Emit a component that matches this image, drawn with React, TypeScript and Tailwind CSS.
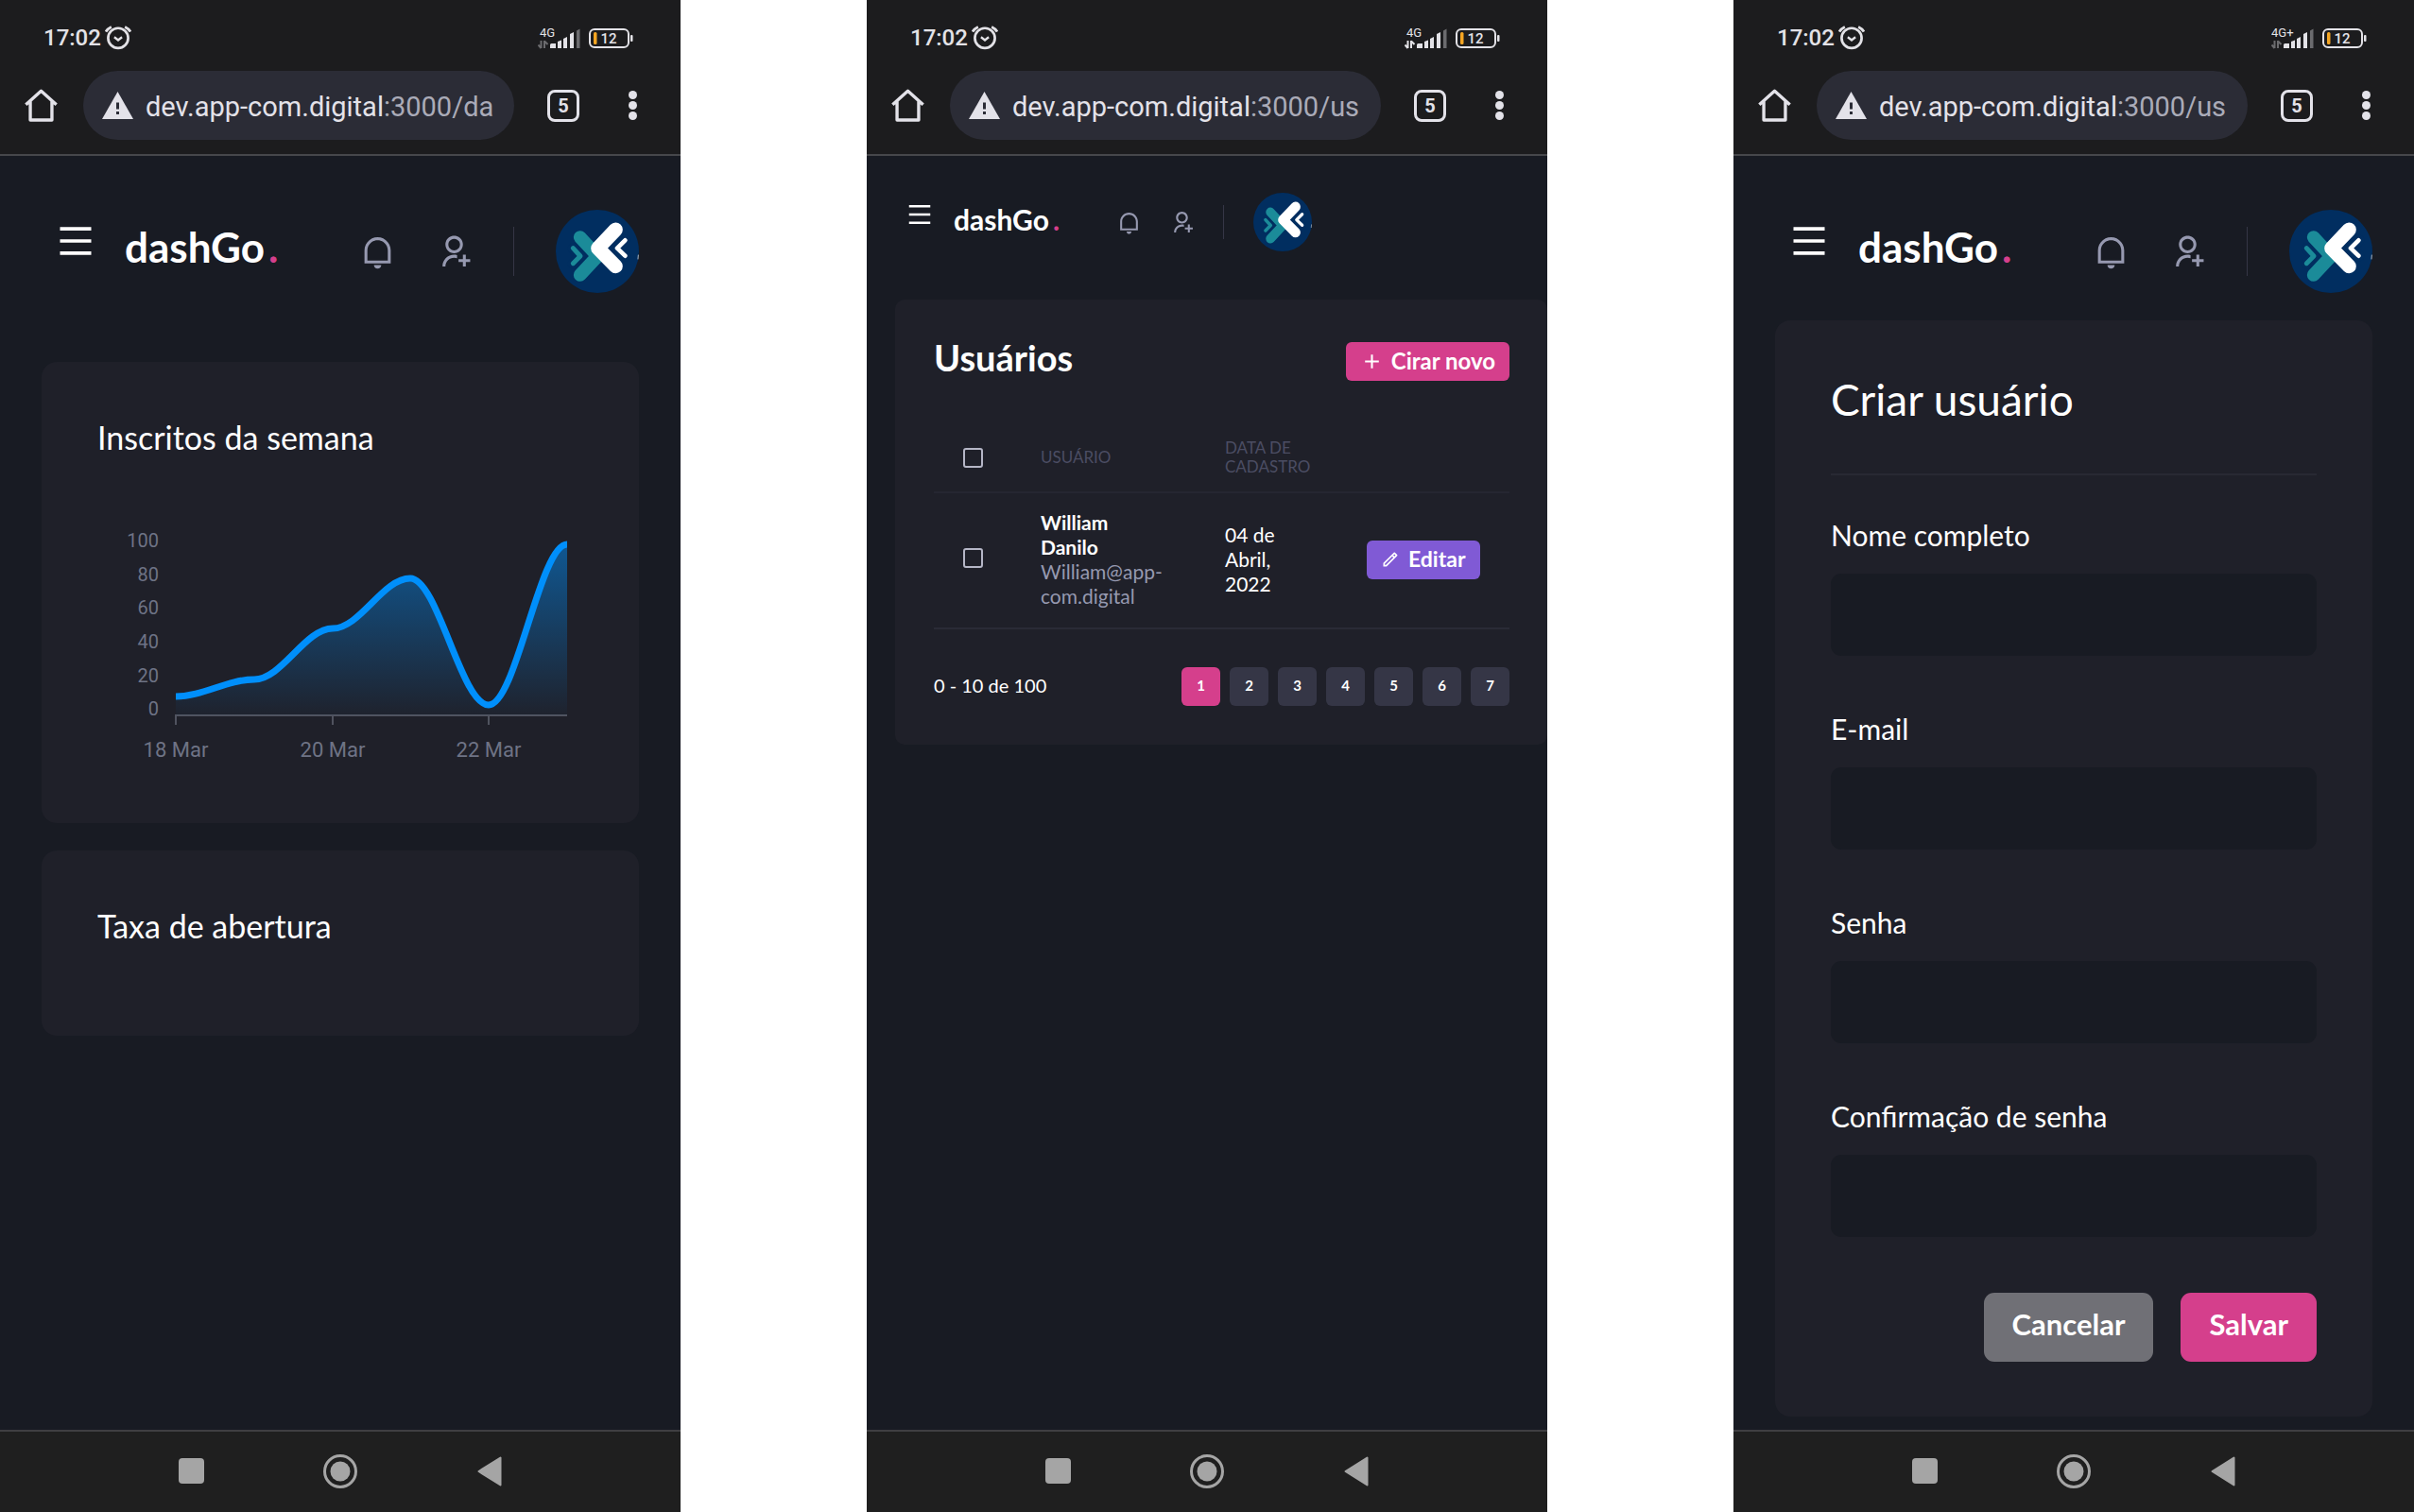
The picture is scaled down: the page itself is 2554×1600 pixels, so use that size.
import { ReactNode, useId } from 'react'
import { RiAddLine, RiMenuLine, RiNotificationLine, RiPencilLine, RiUserAddLine } from 'react-icons/ri'

function AlarmIcon() {
  return (
    <svg className="size-7" viewBox="338 47 82 82" fill="none" stroke="#e3e2e7" strokeWidth="8" aria-hidden="true">
      <circle cx="379" cy="89" r="31" />
      <path d="M367 86l12 9 12-9" strokeWidth="7" />
      <path d="M341 69q6-10 17-15M400 54q11 5 17 15" />
    </svg>
  )
}

function Signal({ network, active }: { network: string; active?: boolean }) {
  return (
    <svg className="h-6 w-[45px]" viewBox="569 27 45 24" aria-hidden="true">
      <text x={network.length > 2 ? 569 : 571} y="38" fontSize="13" fill="#e3e2e7" className="font-[Roboto]">{network}</text>
      <g fill="#e3e2e7">
        <path d="M582 46.500q0-1.500 1.500-1.500h4.500v5h-6zM590 43l4-1.500V50h-4zM596 40l4-2v12h-4zM603 35l4-2v17h-4z" />
      </g>
      <path d="M610 31.500l3.500-2V50H610z" fill="#6b6b6e" />
      <path d="M572.500 42v8M572.500 50l-3-3.500M576 50v-8M576 42.500l3.500 3.500" stroke={active ? '#e3e2e7' : '#6b6b6e'} strokeWidth="2" fill="none" />
    </svg>
  )
}

function Battery() {
  return (
    <svg className="h-6 w-12" viewBox="622 27 48 24" aria-hidden="true">
      <rect x="624" y="30" width="41" height="19" rx="5" fill="none" stroke="#e3e2e7" strokeWidth="2" />
      <rect x="667" y="36" width="2.500" height="7" rx="1" fill="#e3e2e7" />
      <rect x="628" y="33" width="3.500" height="13" rx="1.500" fill="#f5a623" />
      <text x="635.500" y="45" fontSize="15" fontWeight="500" fill="#e3e2e7" className="font-[Roboto]">12</text>
    </svg>
  )
}

function HomeIcon() {
  return (
    <svg className="size-[35px]" viewBox="80 254 104 104" fill="none" stroke="#e3e2e9" strokeWidth="10" strokeLinejoin="round" aria-hidden="true">
      <path d="M84 304l48-43 48 43M98 294v58h68v-58" />
    </svg>
  )
}

function WarningIcon() {
  return (
    <svg className="h-[29px] w-[33px] shrink-0" viewBox="0 0 33 29" aria-hidden="true">
      <path d="M16.500 0L33 29H0z" fill="#e3e2e9" />
      <path d="M15 11.500h3v7h-3zM15 21h3v3h-3z" fill="#2b2c36" />
    </svg>
  )
}

function BrowserBar({ network, active, path }: { network: string; active?: boolean; path: string }) {
  return (
    <header className="border-b-2 border-[#46474b] bg-[#1c1c1e] font-[Roboto]">
      <div className="flex h-[75px] items-center pt-1 pl-[46px] pr-[50px] text-[#e3e2e7]">
        <time className="text-2xl font-medium">17:02</time>
        <span className="ml-1"><AlarmIcon /></span>
        <div className="ml-auto flex items-center gap-2">
          <Signal network={network} active={active} />
          <Battery />
        </div>
      </div>
      <div className="flex items-center pb-[15px] pl-[26px] pr-[46px]">
        <button type="button" aria-label="Página inicial"><HomeIcon /></button>
        <button type="button" aria-label="Endereço do site" className="ml-[27px] flex h-[73px] min-w-0 flex-1 items-center gap-[13px] rounded-full bg-[#2b2c36] pl-5">
          <WarningIcon />
          <span className="pt-0.5 text-[29px] leading-10 whitespace-nowrap text-[#e3e2e9]">
            dev.app-com.digital<span className="text-[#aaabb8]">:3000/{path}</span>
          </span>
        </button>
        <button type="button" aria-label="Abas abertas" className="ml-[35px] flex size-[34px] items-center justify-center rounded-lg border-[3px] border-[#e3e2e9] text-xl leading-none font-bold text-[#e3e2e9]">5</button>
        <button type="button" aria-label="Mais opções" className="ml-[52px] flex flex-col gap-0.5">
          <span className="size-[9px] rounded-full bg-[#e3e2e9]" />
          <span className="size-[9px] rounded-full bg-[#e3e2e9]" />
          <span className="size-[9px] rounded-full bg-[#e3e2e9]" />
        </button>
      </div>
    </header>
  )
}

function SystemNav() {
  return (
    <nav aria-label="Sistema" className="flex h-[87px] items-center justify-center gap-[122px] border-t-2 border-[#3f3f42] bg-[#1f1f1f] pb-0.5">
      <button type="button" aria-label="Recentes" className="flex w-9 justify-center">
        <span className="size-[27px] rounded bg-[#a5a5a5]" />
      </button>
      <button type="button" aria-label="Início">
        <svg className="size-9" viewBox="0 0 36 36" aria-hidden="true">
          <circle cx="18" cy="18" r="16.500" fill="none" stroke="#a5a5a5" strokeWidth="3" />
          <circle cx="18" cy="18" r="10.500" fill="#a5a5a5" />
        </svg>
      </button>
      <button type="button" aria-label="Voltar" className="flex w-9 justify-center">
        <svg className="h-8 w-[26px]" viewBox="0 0 26 32" aria-hidden="true">
          <path d="M24.500 1.500v29L1.500 16z" fill="#a5a5a5" stroke="#a5a5a5" strokeWidth="2" strokeLinejoin="round" />
        </svg>
      </button>
    </nav>
  )
}

function Avatar({ className }: { className: string }) {
  return (
    <svg className={className} viewBox="86 66 264 264" fill="none" strokeLinecap="round" strokeLinejoin="round" role="img" aria-label="Avatar">
      <circle cx="218" cy="198" r="132" fill="#012e60" />
      <path d="M163 153l56 60-56 60" stroke="#1b8b99" strokeWidth="41" />
      <path d="M141 188l23 25-23 23" stroke="#012e60" strokeWidth="34" />
      <path d="M141 188l23 25-23 23" stroke="#1b8b99" strokeWidth="15" />
      <path d="M276 129l-56 59 56 57" stroke="#fff" strokeWidth="45" />
      <path d="M306 163l-25 25 25 24" stroke="#012e60" strokeWidth="36" />
      <path d="M306 163l-25 25 25 24" stroke="#fff" strokeWidth="14" />
      <path d="M348 210l-1 12" stroke="#fff" strokeWidth="2" />
    </svg>
  )
}

function AppHeader({ compact }: { compact?: boolean }) {
  return (
    <div className={compact ? 'flex w-[471px] items-center pt-[39px] pl-[41px]' : 'flex items-center pt-[57px] pl-[58px] pr-11'}>
      <button type="button" aria-label="Abrir menu" className={compact ? 'pb-4 text-3xl text-white' : 'pb-[22px] text-[44px] text-white'}>
        <RiMenuLine />
      </button>
      <a href="#inicio" className={compact ? 'ml-[21px] pb-1.5 text-[30px] leading-9 font-bold text-white' : 'ml-[30px] pb-[10px] text-[44px] leading-[52px] font-bold text-white'}>
        dashGo<span className="ml-1 text-[#d53f8c]">.</span>
      </a>
      <div className={compact ? 'ml-auto flex items-center gap-[31px] text-[25px] text-[#9699b0]' : 'ml-auto flex items-center gap-11 text-[37px] text-[#9699b0]'}>
        <button type="button" aria-label="Notificações"><RiNotificationLine /></button>
        <button type="button" aria-label="Adicionar usuário"><RiUserAddLine /></button>
        <span className={compact ? 'h-9 w-px bg-[#353646]' : 'h-[52px] w-px bg-[#353646]'} />
        <Avatar className={compact ? 'size-[62px]' : 'size-[88px]'} />
      </div>
    </div>
  )
}

function Phone({ children, ...bar }: { children: ReactNode; network: string; active?: boolean; path: string }) {
  return (
    <section className="flex min-h-screen min-w-0 flex-col overflow-hidden bg-[#181b23] font-[Lato,sans-serif] text-white">
      <BrowserBar {...bar} />
      <main className="flex-1">{children}</main>
      <SystemNav />
    </section>
  )
}

const yLabels: [string, number][] = [['100', 91], ['80', 127], ['60', 162], ['40', 198], ['20', 234], ['0', 269]]
const xLabels: [string, number][] = [['18 Mar', 83], ['20 Mar', 249], ['22 Mar', 414]]
const curve = 'M83 256C112 256 137 238 166 238S220 184 249 184S302 131 331 131S385 265 414 265S468 95 497 95'

function SignupsChart() {
  return (
    <svg className="block w-full" viewBox="0 2 514 330" role="img" aria-label="Inscritos por dia">
      <defs>
        <linearGradient id="area" x1="0" y1="95" x2="0" y2="276" gradientUnits="userSpaceOnUse">
          <stop offset="0" stopColor="#008ffb" stopOpacity="0.500" />
          <stop offset="1" stopColor="#008ffb" stopOpacity="0.020" />
        </linearGradient>
        <clipPath id="plot"><rect x="83" y="80" width="414" height="200" /></clipPath>
      </defs>
      <g fill="#6e7385" className="font-[Roboto]">
        {yLabels.map(([t, y]) => <text key={t} x="65" y={y + 7} fontSize="20" textAnchor="end">{t}</text>)}
        {xLabels.map(([t, x]) => <text key={t} x={x} y="320" fontSize="22" textAnchor="middle">{t}</text>)}
      </g>
      <path d="M83 286v-10h414M249 276v10M414 276v10" stroke="#50535f" strokeWidth="2" fill="none" />
      <g clipPath="url(#plot)">
        <path d={`${curve}V276H83Z`} fill="url(#area)" />
        <path d={curve} fill="none" stroke="#008ffb" strokeWidth="7" />
      </g>
    </svg>
  )
}

function Dashboard() {
  return (
    <>
      <AppHeader />
      <div className="mt-[73px] flex flex-col gap-[29px] px-11">
        <article className="rounded-2xl bg-[#1f2029] px-[59px] pt-[60px] pb-[58px]">
          <h2 className="text-[34px] leading-10">Inscritos da semana</h2>
          <SignupsChart />
        </article>
        <article className="min-h-[196px] rounded-2xl bg-[#1f2029] px-[59px] pt-[60px] pb-[58px]">
          <h2 className="text-[34px] leading-10">Taxa de abertura</h2>
        </article>
      </div>
    </>
  )
}

function Check({ label }: { label: string }) {
  return <input type="checkbox" aria-label={label} className="block size-[21px] appearance-none rounded-[3px] border-2 border-[#b5b6c6] checked:bg-[#d53f8c]" />
}

function Users() {
  return (
    <>
      <AppHeader compact />
      <div className="mt-[51px] ml-[30px] rounded-[10px] bg-[#1f2029] pt-[41px] pr-10 pb-[41px] pl-[41px]">
        <div className="flex items-center justify-between">
          <h1 className="pb-[9px] text-[38px] leading-10 font-bold">Usuários</h1>
          <a href="#novo" className="flex h-[41px] items-center gap-2 rounded-md bg-[#d53f8c] px-[15px] text-2xl font-bold">
            <RiAddLine className="size-[25px]" /><span className="pb-0.5">Cirar novo</span>
          </a>
        </div>
        <table className="mt-[41px] w-full table-fixed text-left">
          <thead>
            <tr className="border-b-2 border-[#252631] text-[17px] leading-5 text-[#4b4d63]">
              <th className="w-[82px] px-[31px] py-4"><Check label="Selecionar todos" /></th>
              <th className="w-[195px] px-[31px] py-4 font-normal">USUÁRIO</th>
              <th className="w-[150px] px-[31px] py-4 font-normal">DATA DE CADASTRO</th>
              <th aria-label="Ações" />
            </tr>
          </thead>
          <tbody>
            <tr className="border-b-2 border-[#2a2b36] text-[21px] leading-[26px]">
              <td className="px-[31px] pt-4 pb-[22px]"><Check label="Selecionar William Danilo" /></td>
              <td className="px-[31px] pt-[18px] pb-5">
                <p className="font-bold">William<br />Danilo</p>
                <p className="text-[#9699b0]">William@app-<br />com.digital</p>
              </td>
              <td className="px-[31px] pt-[18px] pb-5">04 de Abril, 2022</td>
              <td className="pt-4 pb-[18px] pl-[31px]">
                <a href="#editar" className="inline-flex h-[41px] items-center gap-[9px] rounded-md bg-[#805ad5] px-[15px] align-middle text-[23px] font-bold">
                  <RiPencilLine className="size-5" /><span className="pb-0.5">Editar</span>
                </a>
              </td>
            </tr>
          </tbody>
        </table>
        <div className="mt-10 flex items-center justify-between">
          <p className="pb-1 text-xl">0 - 10 de 100</p>
          <div className="flex gap-[10px]">
            {[1, 2, 3, 4, 5, 6, 7].map((n) => (
              <button key={n} type="button" className={n === 1 ? 'size-[41px] rounded-md bg-[#d53f8c] pb-0.5 text-[15px] font-bold' : 'size-[41px] rounded-md bg-[#353646] pb-0.5 text-[15px] font-bold'}>{n}</button>
            ))}
          </div>
        </div>
      </div>
    </>
  )
}

function Field({ label, type }: { label: string; type: string }) {
  const id = useId()
  return (
    <div>
      <label htmlFor={id} className="mb-[23px] block text-3xl leading-9">{label}</label>
      <input id={id} type={type} className="block h-[87px] w-full rounded-[11px] bg-[#181b23] px-7 text-3xl outline-none" />
    </div>
  )
}

function CreateUser() {
  return (
    <>
      <AppHeader />
      <form className="mx-11 mt-[29px] mb-[13px] rounded-2xl bg-[#1f2029] px-[59px] pt-[61px] pb-[58px]">
        <h1 className="text-[46px] leading-[46px]">Criar usuário</h1>
        <hr className="mt-[55px] mb-[45px] border-t-2 border-[#282933]" />
        <div className="flex flex-col gap-[59px]">
          <Field label="Nome completo" type="text" />
          <Field label="E-mail" type="email" />
          <Field label="Senha" type="password" />
          <Field label="Confirmação de senha" type="password" />
        </div>
        <div className="mt-[59px] flex justify-end gap-[29px] text-[31px] font-bold">
          <button type="button" className="h-[73px] rounded-[11px] bg-[#707076] px-[30px] pb-1.5">Cancelar</button>
          <button type="submit" className="h-[73px] rounded-[11px] bg-[#d53f8c] px-[30px] pb-1.5">Salvar</button>
        </div>
      </form>
    </>
  )
}

export default function App() {
  return (
    <div className="grid min-h-screen grid-cols-3 gap-[197px] bg-white">
      <Phone network="4G" path="da"><Dashboard /></Phone>
      <Phone network="4G" active path="us"><Users /></Phone>
      <Phone network="4G+" path="us"><CreateUser /></Phone>
    </div>
  )
}
